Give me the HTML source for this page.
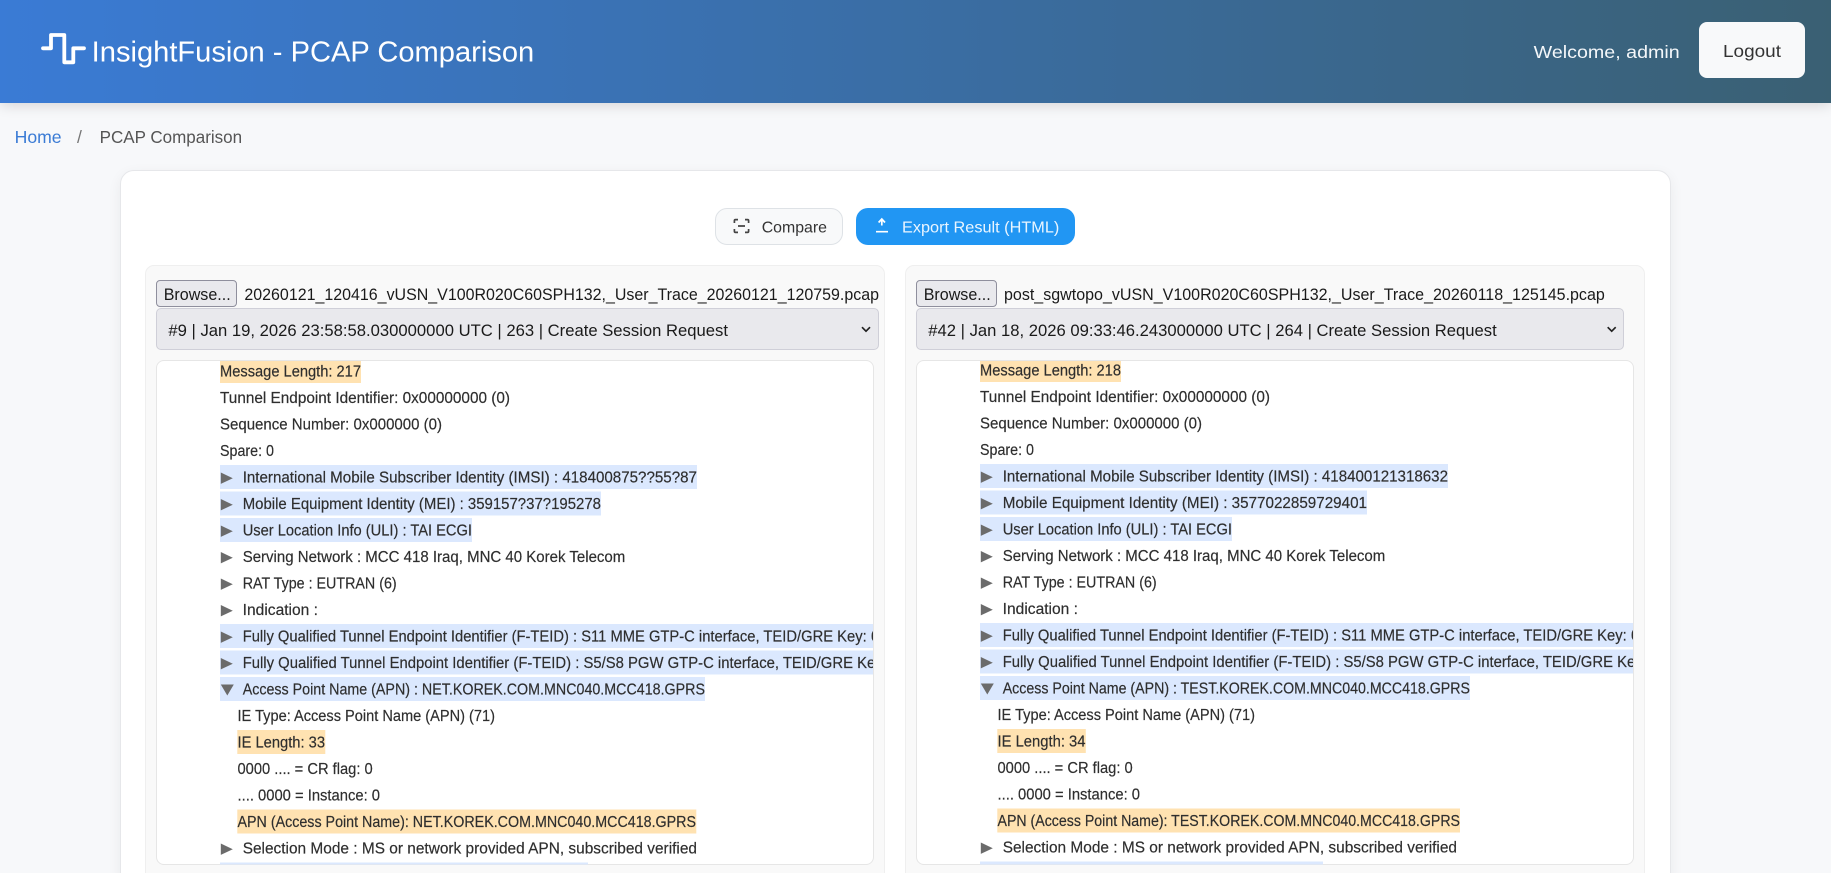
<!DOCTYPE html>
<html lang="en"><head><meta charset="utf-8"><title>InsightFusion - PCAP Comparison</title>
<style>
html,body{margin:0;padding:0;width:1831px;height:873px;overflow:hidden;background:#f7f8fa;font-family:"Liberation Sans",sans-serif}
#root{position:absolute;left:0;top:0;width:1831px;height:873px;overflow:hidden;background:#f7f8fa}
.a{position:absolute;box-sizing:border-box}
#hdr{left:0;top:0;width:1831px;height:103px;background:linear-gradient(to right,#3a7bd5,#3a6073);box-shadow:0 3px 12px rgba(0,0,0,.13)}
#card{left:119.5px;top:169.5px;width:1551px;height:720px;background:#fff;border:1px solid #e6e7ea;border-radius:14px;box-shadow:0 4px 14px rgba(0,0,0,.06)}
.panel{top:265px;height:640px;background:#f9f9f9;border:1px solid #efefef;border-radius:9px}
.tree{top:360px;height:505px;background:#fff;border:1px solid #e6e6e6;border-radius:8px}
.browse{top:280px;height:27px;background:#e9e9ed;border:1px solid #8f8f9d;border-radius:4px}
.sel{top:308px;height:42px;background:#e9e9ed;border:1px solid #cfcfd8;border-radius:5px}
svg{position:absolute;left:0;top:0}
text{font-family:"Liberation Sans",sans-serif;font-size:15.5px;fill:#333;white-space:pre}
.tr text{fill:#2e2e2e;stroke:#2e2e2e;stroke-width:.18px;transform:translateY(-.7px)}
.t{fill:#6b6b6b}.b{fill:#dbe8fe}.o{fill:#ffe2b1}
.f{font-size:16.5px;fill:#1a1a1a}
</style></head><body>
<div id="root">
<div class="a" id="hdr"></div>
<div class="a" style="left:1699px;top:21.5px;width:106px;height:56px;background:#f8f9fa;border-radius:8px"></div>
<div class="a" id="card"></div>
<div class="a" style="left:715px;top:208px;width:127.5px;height:37px;background:#f8f9fa;border:1px solid #dee2e6;border-radius:12px"></div>
<div class="a" style="left:856px;top:208px;width:219px;height:37px;background:#2196f3;border-radius:12px"></div>
<div class="a panel" style="left:145px;width:739.5px"></div>
<div class="a panel" style="left:905px;width:740px"></div>
<div class="a browse" style="left:156px;width:80.5px"></div>
<div class="a browse" style="left:916px;width:81px"></div>
<div class="a sel" style="left:156px;width:723px"></div>
<div class="a sel" style="left:916px;width:707.5px"></div>
<div class="a tree" style="left:156px;width:718px"></div>
<div class="a tree" style="left:916px;width:718px"></div>
<svg width="1831" height="873" viewBox="0 0 1831 873" xmlns="http://www.w3.org/2000/svg">
<defs>
<clipPath id="cl"><rect x="157" y="361" width="716" height="503.5" rx="7"/></clipPath>
<clipPath id="cr"><rect x="917" y="361" width="716" height="503.5" rx="7"/></clipPath>
</defs>

<!-- header -->
<path d="M43 48.3H51V35H64.3V62.3H73.3V48.3H84" fill="none" stroke="#fff" stroke-width="3.8" stroke-linecap="round" stroke-linejoin="round"/>
<text x="91.7" y="61.5" textLength="442.5" lengthAdjust="spacingAndGlyphs" style="font-size:28.8px;fill:#fff">InsightFusion - PCAP Comparison</text>
<text x="1533.7" y="58" textLength="146" lengthAdjust="spacingAndGlyphs" style="font-size:17.6px;fill:#f4f7fa">Welcome, admin</text>
<text x="1723" y="57" textLength="58" lengthAdjust="spacingAndGlyphs" style="font-size:17.6px;fill:#333">Logout</text>

<!-- breadcrumb -->
<text x="14.6" y="143" textLength="47" lengthAdjust="spacingAndGlyphs" style="font-size:17.6px;fill:#3a7bd5">Home</text>
<text x="77" y="143" style="font-size:17.6px;fill:#777">/</text>
<text x="99.6" y="143" textLength="142.5" lengthAdjust="spacingAndGlyphs" style="font-size:17.6px;fill:#555">PCAP Comparison</text>

<!-- buttons -->
<g fill="none" stroke="#444" stroke-width="1.7">
<path d="M738 219.6H735.5Q734.4 219.6 734.4 220.7V223M745 219.6H747.5Q748.6 219.6 748.6 220.7V223M738 232.4H735.5Q734.4 232.4 734.4 231.3V229M745 232.4H747.5Q748.6 232.4 748.6 231.3V229M738 226H745"/>
</g>
<text x="761.7" y="232.7" textLength="65.3" lengthAdjust="spacingAndGlyphs" style="font-size:16px;fill:#333">Compare</text>
<path d="M881.8 225.5V219.5M878.6 222.5L881.8 219L885 222.5M876 231.7H888" fill="none" stroke="#fff" stroke-width="1.7"/>
<text x="902" y="232.7" textLength="157.3" lengthAdjust="spacingAndGlyphs" style="font-size:16px;fill:#eaf5ff">Export Result (HTML)</text>

<!-- file inputs -->
<text x="163.7" y="300" textLength="67" lengthAdjust="spacingAndGlyphs" class="f">Browse...</text>
<text x="923.7" y="300" textLength="67" lengthAdjust="spacingAndGlyphs" class="f">Browse...</text>
<text x="244.4" y="300" textLength="634.6" lengthAdjust="spacingAndGlyphs" class="f">20260121_120416_vUSN_V100R020C60SPH132,_User_Trace_20260121_120759.pcap</text>
<text x="1004" y="300" textLength="600.8" lengthAdjust="spacingAndGlyphs" class="f">post_sgwtopo_vUSN_V100R020C60SPH132,_User_Trace_20260118_125145.pcap</text>

<!-- selects -->
<text x="168.4" y="336" textLength="559.6" lengthAdjust="spacingAndGlyphs" class="f">#9 | Jan 19, 2026 23:58:58.030000000 UTC | 263 | Create Session Request</text>
<text x="928.3" y="336" textLength="568.4" lengthAdjust="spacingAndGlyphs" class="f">#42 | Jan 18, 2026 09:33:46.243000000 UTC | 264 | Create Session Request</text>
<path d="M862 327.2L866 331.2L870 327.2M1607.7 327.2L1611.7 331.2L1615.7 327.2" fill="none" stroke="#222" stroke-width="1.7"/>

<!-- left tree -->
<g clip-path="url(#cl)" class="tr">
<rect class="o" x="220" y="359" width="141" height="24"/>
<rect class="b" x="220" y="465" width="477" height="24"/>
<rect class="b" x="220" y="491.5" width="381" height="24"/>
<rect class="b" x="220" y="518" width="252" height="24"/>
<rect class="b" x="220" y="624" width="660" height="24"/>
<rect class="b" x="220" y="650.5" width="660" height="24"/>
<rect class="b" x="220" y="677" width="485" height="24"/>
<rect class="o" x="237.3" y="730" width="88" height="24"/>
<rect class="o" x="237.3" y="809.5" width="459" height="24"/>
<rect class="b" x="220" y="862.5" width="368" height="24"/>
<text x="220" y="377.3" textLength="141" lengthAdjust="spacingAndGlyphs">Message Length: 217</text>
<text x="220" y="403.8" textLength="290" lengthAdjust="spacingAndGlyphs">Tunnel Endpoint Identifier: 0x00000000 (0)</text>
<text x="220" y="430.3" textLength="222" lengthAdjust="spacingAndGlyphs">Sequence Number: 0x000000 (0)</text>
<text x="220" y="456.8" textLength="54" lengthAdjust="spacingAndGlyphs">Spare: 0</text>
<polygon class="t" points="0,0 12,5.7 0,11.4" transform="translate(220.8,472.5)"/>
<text x="242.7" y="483.3" textLength="454.3" lengthAdjust="spacingAndGlyphs">International Mobile Subscriber Identity (IMSI) : 418400875??55?87</text>
<polygon class="t" points="0,0 12,5.7 0,11.4" transform="translate(220.8,499)"/>
<text x="242.7" y="509.8" textLength="358.3" lengthAdjust="spacingAndGlyphs">Mobile Equipment Identity (MEI) : 359157?37?195278</text>
<polygon class="t" points="0,0 12,5.7 0,11.4" transform="translate(220.8,525.5)"/>
<text x="242.7" y="536.3" textLength="229.3" lengthAdjust="spacingAndGlyphs">User Location Info (ULI) : TAI ECGI</text>
<polygon class="t" points="0,0 12,5.7 0,11.4" transform="translate(220.8,552)"/>
<text x="242.7" y="562.8" textLength="382.6" lengthAdjust="spacingAndGlyphs">Serving Network : MCC 418 Iraq, MNC 40 Korek Telecom</text>
<polygon class="t" points="0,0 12,5.7 0,11.4" transform="translate(220.8,578.5)"/>
<text x="242.7" y="589.3" textLength="154" lengthAdjust="spacingAndGlyphs">RAT Type : EUTRAN (6)</text>
<polygon class="t" points="0,0 12,5.7 0,11.4" transform="translate(220.8,605)"/>
<text x="242.7" y="615.8" textLength="75.3" lengthAdjust="spacingAndGlyphs">Indication :</text>
<polygon class="t" points="0,0 12,5.7 0,11.4" transform="translate(220.8,631.5)"/>
<text x="242.7" y="642.3" textLength="624" lengthAdjust="spacingAndGlyphs">Fully Qualified Tunnel Endpoint Identifier (F-TEID) : S11 MME GTP-C interface, TEID/GRE Key:</text>
<text x="871" y="642.3">0</text>
<polygon class="t" points="0,0 12,5.7 0,11.4" transform="translate(220.8,658)"/>
<text x="242.7" y="668.8" textLength="640" lengthAdjust="spacingAndGlyphs">Fully Qualified Tunnel Endpoint Identifier (F-TEID) : S5/S8 PGW GTP-C interface, TEID/GRE Key</text>
<polygon class="t" points="0,0 13,0 6.5,11" transform="translate(220.8,684.5)"/>
<text x="242.7" y="695.3" textLength="462.3" lengthAdjust="spacingAndGlyphs">Access Point Name (APN) : NET.KOREK.COM.MNC040.MCC418.GPRS</text>
<text x="237.5" y="721.8" textLength="257.5" lengthAdjust="spacingAndGlyphs">IE Type: Access Point Name (APN) (71)</text>
<text x="237.5" y="748.3" textLength="87.5" lengthAdjust="spacingAndGlyphs">IE Length: 33</text>
<text x="237.5" y="774.8" textLength="135.2" lengthAdjust="spacingAndGlyphs">0000 .... = CR flag: 0</text>
<text x="237.5" y="801.3" textLength="142.5" lengthAdjust="spacingAndGlyphs">.... 0000 = Instance: 0</text>
<text x="237.5" y="827.8" textLength="458.5" lengthAdjust="spacingAndGlyphs">APN (Access Point Name): NET.KOREK.COM.MNC040.MCC418.GPRS</text>
<polygon class="t" points="0,0 12,5.7 0,11.4" transform="translate(220.8,843.5)"/>
<text x="242.7" y="854.3" textLength="454.3" lengthAdjust="spacingAndGlyphs">Selection Mode : MS or network provided APN, subscribed verified</text>
</g>

<!-- right tree -->
<g clip-path="url(#cr)" class="tr">
<rect class="o" x="980" y="358" width="141" height="24"/>
<rect class="b" x="980" y="464" width="468" height="24"/>
<rect class="b" x="980" y="490.5" width="387" height="24"/>
<rect class="b" x="980" y="517" width="252" height="24"/>
<rect class="b" x="980" y="623" width="660" height="24"/>
<rect class="b" x="980" y="649.5" width="660" height="24"/>
<rect class="b" x="980" y="676" width="490" height="24"/>
<rect class="o" x="997.3" y="729" width="88.5" height="24"/>
<rect class="o" x="997.3" y="808.5" width="462.7" height="24"/>
<rect class="b" x="980" y="861.5" width="343" height="24"/>
<text x="980" y="376.3" textLength="141" lengthAdjust="spacingAndGlyphs">Message Length: 218</text>
<text x="980" y="402.8" textLength="290" lengthAdjust="spacingAndGlyphs">Tunnel Endpoint Identifier: 0x00000000 (0)</text>
<text x="980" y="429.3" textLength="222" lengthAdjust="spacingAndGlyphs">Sequence Number: 0x000000 (0)</text>
<text x="980" y="455.8" textLength="54" lengthAdjust="spacingAndGlyphs">Spare: 0</text>
<polygon class="t" points="0,0 12,5.7 0,11.4" transform="translate(980.8,471.5)"/>
<text x="1002.7" y="482.3" textLength="445.3" lengthAdjust="spacingAndGlyphs">International Mobile Subscriber Identity (IMSI) : 418400121318632</text>
<polygon class="t" points="0,0 12,5.7 0,11.4" transform="translate(980.8,498)"/>
<text x="1002.7" y="508.8" textLength="364.3" lengthAdjust="spacingAndGlyphs">Mobile Equipment Identity (MEI) : 3577022859729401</text>
<polygon class="t" points="0,0 12,5.7 0,11.4" transform="translate(980.8,524.5)"/>
<text x="1002.7" y="535.3" textLength="229.3" lengthAdjust="spacingAndGlyphs">User Location Info (ULI) : TAI ECGI</text>
<polygon class="t" points="0,0 12,5.7 0,11.4" transform="translate(980.8,551)"/>
<text x="1002.7" y="561.8" textLength="382.6" lengthAdjust="spacingAndGlyphs">Serving Network : MCC 418 Iraq, MNC 40 Korek Telecom</text>
<polygon class="t" points="0,0 12,5.7 0,11.4" transform="translate(980.8,577.5)"/>
<text x="1002.7" y="588.3" textLength="154" lengthAdjust="spacingAndGlyphs">RAT Type : EUTRAN (6)</text>
<polygon class="t" points="0,0 12,5.7 0,11.4" transform="translate(980.8,604)"/>
<text x="1002.7" y="614.8" textLength="75.3" lengthAdjust="spacingAndGlyphs">Indication :</text>
<polygon class="t" points="0,0 12,5.7 0,11.4" transform="translate(980.8,630.5)"/>
<text x="1002.7" y="641.3" textLength="624" lengthAdjust="spacingAndGlyphs">Fully Qualified Tunnel Endpoint Identifier (F-TEID) : S11 MME GTP-C interface, TEID/GRE Key:</text>
<text x="1631" y="641.3">0</text>
<polygon class="t" points="0,0 12,5.7 0,11.4" transform="translate(980.8,657)"/>
<text x="1002.7" y="667.8" textLength="640" lengthAdjust="spacingAndGlyphs">Fully Qualified Tunnel Endpoint Identifier (F-TEID) : S5/S8 PGW GTP-C interface, TEID/GRE Key</text>
<polygon class="t" points="0,0 13,0 6.5,11" transform="translate(980.8,683.5)"/>
<text x="1002.7" y="694.3" textLength="467.3" lengthAdjust="spacingAndGlyphs">Access Point Name (APN) : TEST.KOREK.COM.MNC040.MCC418.GPRS</text>
<text x="997.5" y="720.8" textLength="257.5" lengthAdjust="spacingAndGlyphs">IE Type: Access Point Name (APN) (71)</text>
<text x="997.5" y="747.3" textLength="88" lengthAdjust="spacingAndGlyphs">IE Length: 34</text>
<text x="997.5" y="773.8" textLength="135.2" lengthAdjust="spacingAndGlyphs">0000 .... = CR flag: 0</text>
<text x="997.5" y="800.3" textLength="142.5" lengthAdjust="spacingAndGlyphs">.... 0000 = Instance: 0</text>
<text x="997.5" y="826.8" textLength="462.5" lengthAdjust="spacingAndGlyphs">APN (Access Point Name): TEST.KOREK.COM.MNC040.MCC418.GPRS</text>
<polygon class="t" points="0,0 12,5.7 0,11.4" transform="translate(980.8,842.5)"/>
<text x="1002.7" y="853.3" textLength="454.3" lengthAdjust="spacingAndGlyphs">Selection Mode : MS or network provided APN, subscribed verified</text>
</g>
</svg>
</div>
</body></html>
